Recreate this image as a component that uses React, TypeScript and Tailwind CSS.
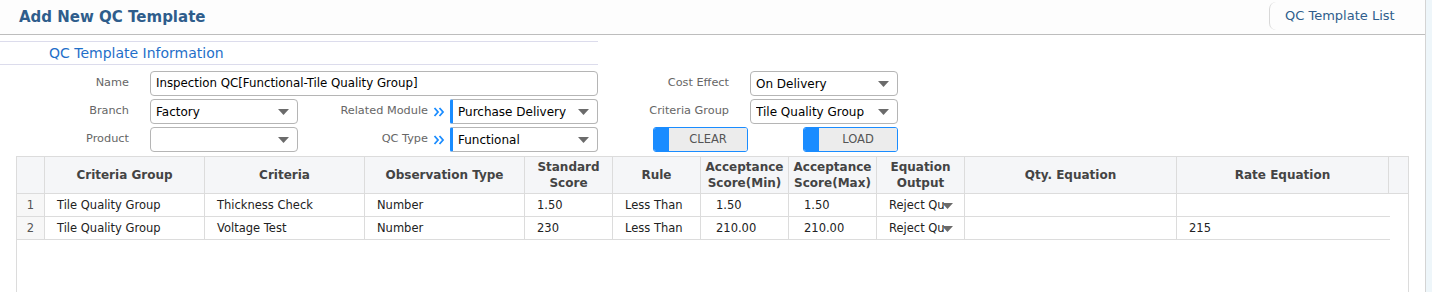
import React from "react";

const font = { fontFamily: '"DejaVu Sans", Verdana, sans-serif' };

function Arrow() {
  return (
    <svg width="11" height="6" viewBox="0 0 11 6" className="shrink-0">
      <path d="M0 0 L11 0 L5.5 6 Z" fill="#6b6b6b" />
    </svg>
  );
}

function Chevrons() {
  return (
    <svg width="12" height="12" viewBox="0 0 12 12" className="mx-[5px] shrink-0">
      <path d="M1.5 2 L5 6 L1.5 10 M6.5 2 L10 6 L6.5 10" fill="none" stroke="#1a8cff" strokeWidth="1.8" />
    </svg>
  );
}

function Select({ value, width, accent }: { value: string; width: string; accent?: boolean }) {
  return (
    <div
      className={`${width} h-[25px] flex items-center justify-between pl-[5px] pr-[8px] bg-white border border-[#b5b5b5] rounded-[4px] text-[12px] text-black ${
        accent ? "border-l-[3px] border-l-[#1a8cff] rounded-l-[2px]" : ""
      }`}
    >
      <span className="truncate">{value}</span>
      <Arrow />
    </div>
  );
}

function Label({ text, width }: { text: string; width: string }) {
  return <div className={`${width} shrink-0 text-right pr-[21px] text-[11.3px] text-[#666]`}>{text}</div>;
}

function SplitButton({ text }: { text: string }) {
  return (
    <div className="w-[95px] h-[25px] flex border border-[#1a8cff] rounded-[3px] overflow-hidden">
      <div className="w-[15px] bg-[#1a8cff]" />
      <div className="flex-1 bg-[#ececec] flex items-center justify-center text-[11.5px] text-[#555]">{text}</div>
    </div>
  );
}

const cols = [29, 160, 160, 160, 88, 88, 88, 88, 88, 212, 212];
const headers = [
  "",
  "Criteria Group",
  "Criteria",
  "Observation Type",
  "Standard Score",
  "Rule",
  "Acceptance Score(Min)",
  "Acceptance Score(Max)",
  "Equation Output",
  "Qty. Equation",
  "Rate Equation",
];

const rows = [
  ["1", "Tile Quality Group", "Thickness Check", "Number", "1.50", "Less Than", "1.50", "1.50", "Reject Qu", "", ""],
  ["2", "Tile Quality Group", "Voltage Test", "Number", "230", "Less Than", "210.00", "210.00", "Reject Qu", "", "215"],
];

export default function App() {
  return (
    <div className="w-[1432px] h-[292px] overflow-hidden bg-white flex" style={font}>
      <div className="w-[1426px] shrink-0 border-r border-[#d4d4d4] flex flex-col">
        <div className="h-[35px] shrink-0 border-b border-[#bdbdbd] flex items-center justify-between bg-[#fdfdfd]">
          <h1 className="pl-[19px] text-[15px] font-bold text-[#2f5d8c]">Add New QC Template</h1>
          <div className="h-[28px] mb-[2px] w-[156px] border-l border-[#d8d8d8] rounded-l-[7px] flex items-center pl-[15px] text-[13px] text-[#2f5d8c]">
            QC Template List
          </div>
        </div>

        <div className="mt-[6px] w-[598px] h-[24px] border-t border-b border-[#dcdcec] flex items-center pl-[49px] text-[14px] text-[#1f6fc9]">
          QC Template Information
        </div>

        <div className="mt-[6px] flex flex-col gap-[3px]">
          <div className="flex items-center">
            <Label text="Name" width="w-[150px]" />
            <div className="w-[448px] h-[25px] flex items-center pl-[5px] border border-[#b5b5b5] rounded-[4px] text-[11.8px] text-black">
              Inspection QC[Functional-Tile Quality Group]
            </div>
            <Label text="Cost Effect" width="w-[152px]" />
            <Select value="On Delivery" width="w-[148px]" />
          </div>
          <div className="flex items-center">
            <Label text="Branch" width="w-[150px]" />
            <Select value="Factory" width="w-[148px]" />
            <div className="w-[152px] flex items-center justify-end text-[11.3px] text-[#666]">
              Related Module
              <Chevrons />
            </div>
            <Select value="Purchase Delivery" width="w-[148px]" accent />
            <Label text="Criteria Group" width="w-[152px]" />
            <Select value="Tile Quality Group" width="w-[148px]" />
          </div>
          <div className="flex items-center">
            <Label text="Product" width="w-[150px]" />
            <Select value="" width="w-[148px]" />
            <div className="w-[152px] flex items-center justify-end text-[11.3px] text-[#666]">
              QC Type
              <Chevrons />
            </div>
            <Select value="Functional" width="w-[148px]" accent />
            <div className="ml-[55px]">
              <SplitButton text="CLEAR" />
            </div>
            <div className="ml-[55px]">
              <SplitButton text="LOAD" />
            </div>
          </div>
        </div>

        <div className="mt-[4px] ml-[16px] w-[1393px] flex-1 border border-[#dcdcdc] border-b-0 text-[11.5px]">
          <div className="flex h-[37px] bg-[#f5f6f8] border-b border-[#dcdcdc]">
            {headers.map((h, i) => (
              <div
                key={i}
                style={{ width: cols[i] - (i === 0 ? 1 : 0) }}
                className="shrink-0 border-r border-[#dcdcdc] flex items-center justify-center text-center font-bold text-[12px] text-[#444] leading-[16px] px-[1px]"
              >
                {h}
              </div>
            ))}
            <div className="flex-1" />
          </div>
          {rows.map((r, ri) => (
            <div key={ri} className="flex h-[23px] w-[1373px] border-b border-[#dcdcdc]">
              {r.map((c, ci) => (
                <div
                  key={ci}
                  style={{ width: cols[ci] - (ci === 0 ? 1 : 0) }}
                  className={`shrink-0 flex items-center pt-[2px] text-[#222] overflow-hidden whitespace-nowrap ${
                    ci === 0
                      ? "justify-center bg-[#f7f7f7] border-r border-[#dcdcdc] text-[#555]"
                      : ci === 6 || ci === 7
                      ? "pl-[15px] border-r border-[#dcdcdc]"
                      : ci === 10
                      ? "pl-[12px]"
                      : "pl-[12px] border-r border-[#dcdcdc]"
                  }`}
                >
                  {c}
                  {ci === 8 && (
                    <span className="ml-[-3px]">
                      <Arrow />
                    </span>
                  )}
                </div>
              ))}
            </div>
          ))}
        </div>
      </div>
      <div className="flex-1 bg-[#eef6fa]" />
    </div>
  );
}
